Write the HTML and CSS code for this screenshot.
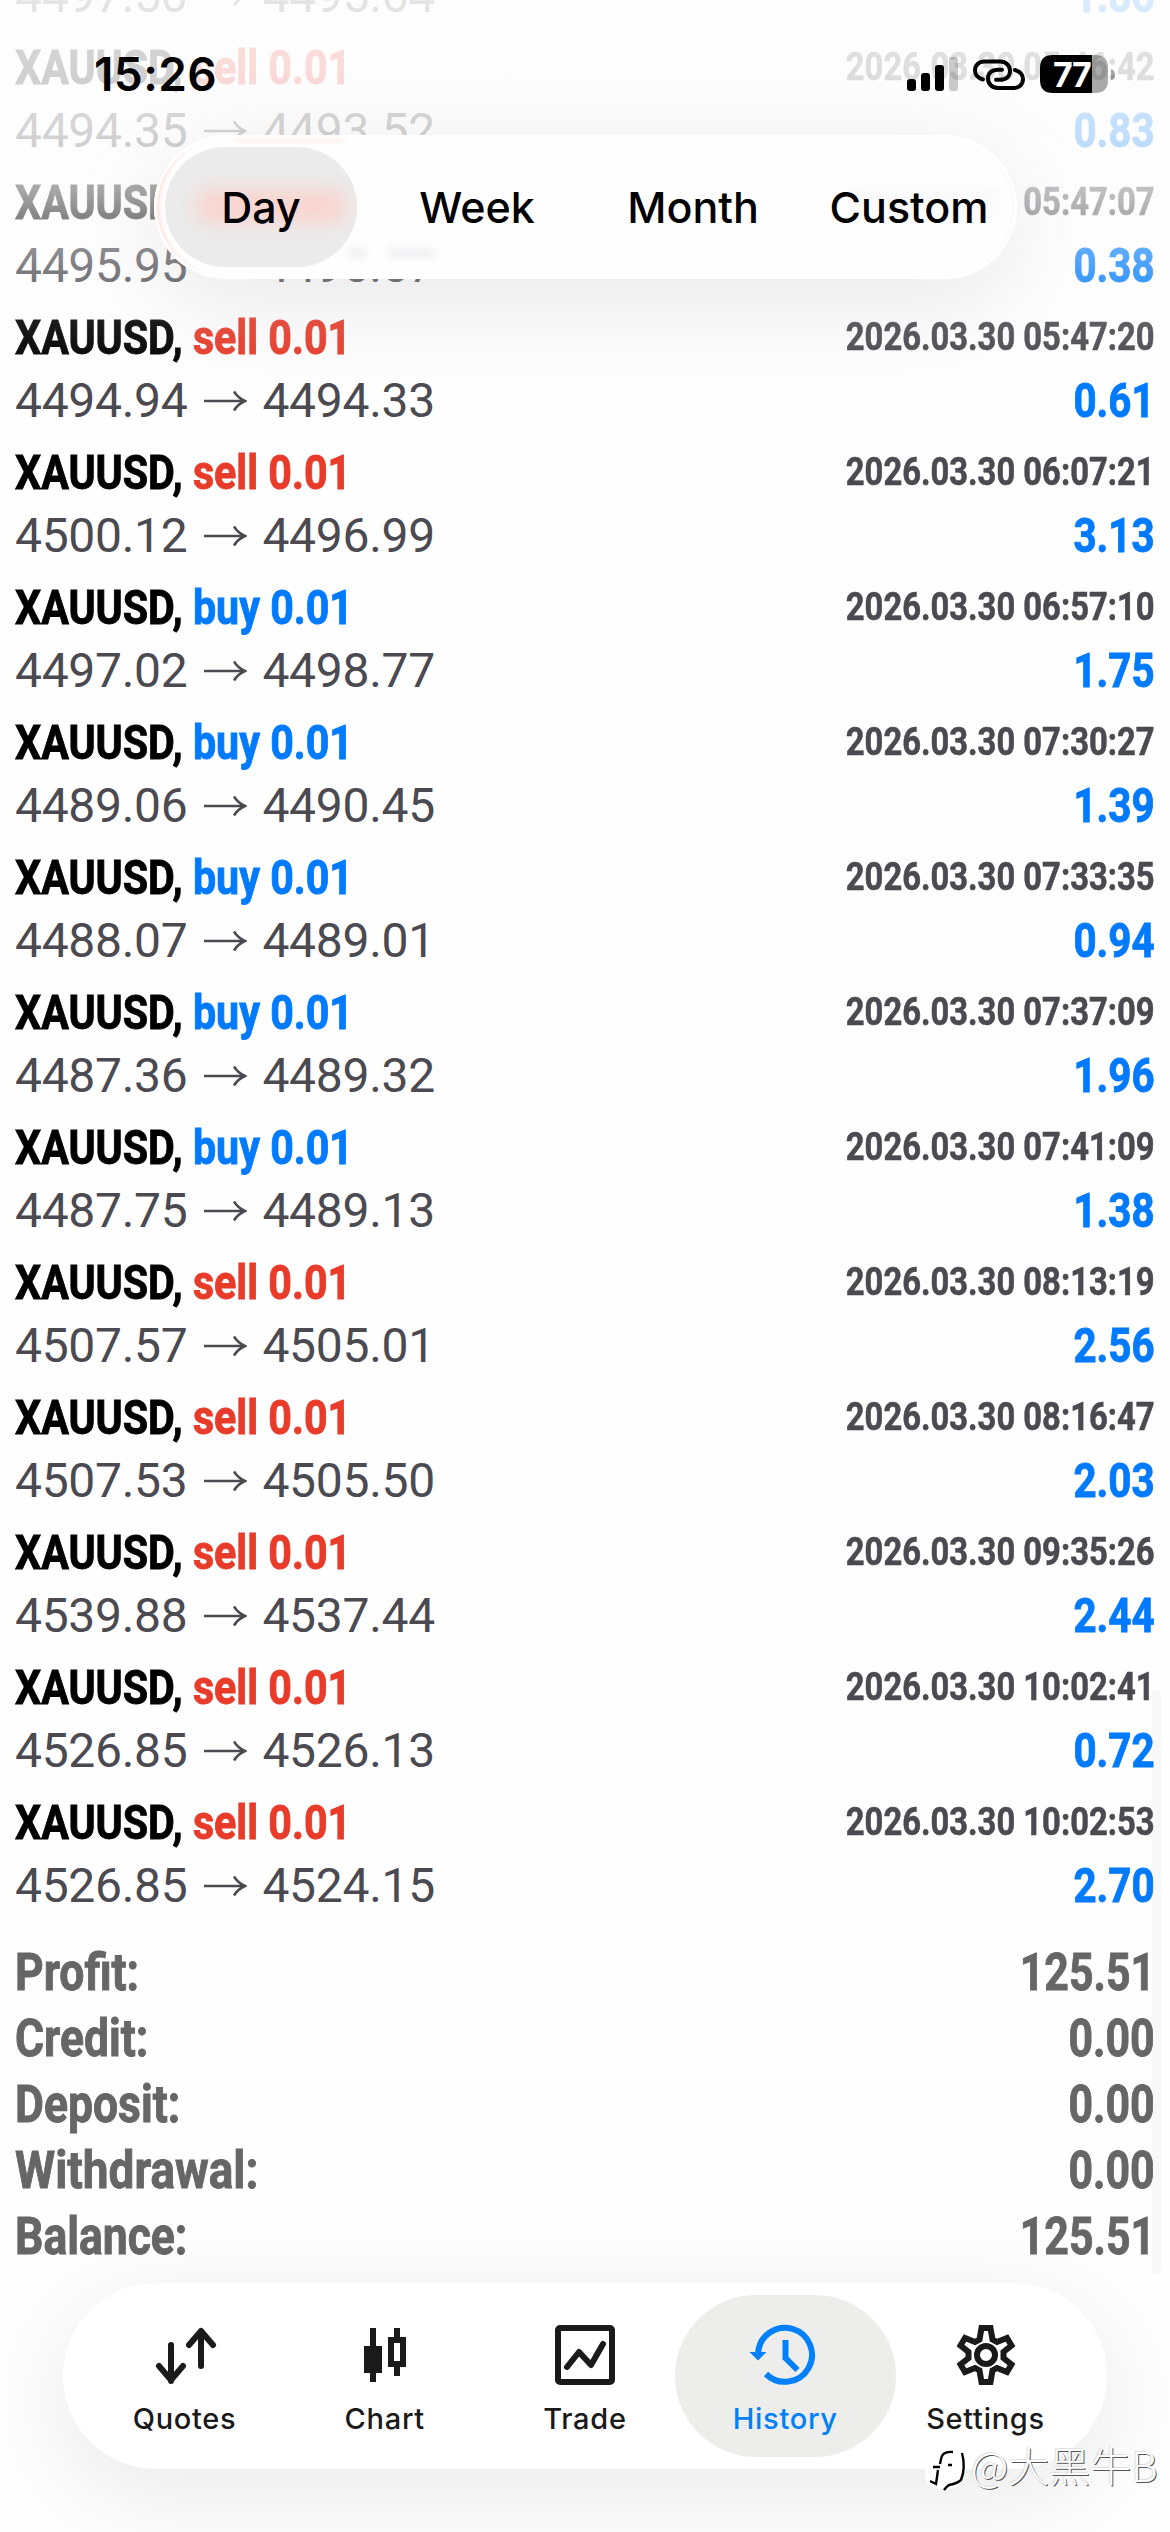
FILE: index.html
```html
<!DOCTYPE html>
<html lang="en">
<head>
<meta charset="utf-8">
<title>History</title>
<link rel="stylesheet" href="styles.css">
</head>
<body>
<main class="screen">
  <section class="deals" id="deals"></section>
  <dl class="totals">
    <div><dt>Profit:</dt><dd>125.51</dd></div>
    <div><dt>Credit:</dt><dd>0.00</dd></div>
    <div><dt>Deposit:</dt><dd>0.00</dd></div>
    <div><dt class="wide">Withdrawal:</dt><dd>0.00</dd></div>
    <div><dt>Balance:</dt><dd>125.51</dd></div>
  </dl>
  <div class="scrollbar"></div>
  <div class="top-fade"></div>

  <header class="overlay-top">
    <div class="status">
      <span class="clock">15:26</span>
      <svg class="status-icons" width="212" height="44" viewBox="904 52 212 44">
        <rect x="907" y="79" width="9" height="12" rx="3"/>
        <rect x="921" y="73" width="9" height="18" rx="3"/>
        <rect x="935" y="65" width="9" height="26" rx="3"/>
        <rect x="949" y="57" width="9" height="34" rx="3" fill="#000" opacity=".2"/>
        <g fill="none" stroke="#000" stroke-width="4" stroke-linecap="round">
          <path d="M983 79.500C978 78 975 75 975 70.500C975 65 979 61.500 984 61.500H1000C1006 61.500 1010 65.500 1010 71C1010 76.500 1006 79.800 1000 79.800H996"/>
          <path d="M1015 70C1020 71.500 1023 74.500 1023 79C1023 84.500 1019 88 1014 88H998C992 88 988 84 988 78.500C988 73 992 69.700 998 69.700H1002"/>
        </g>
        <path d="M1053 55H1092V93H1053Q1040 93 1040 80V68Q1040 55 1053 55Z"/>
        <path d="M1092 55H1095Q1108 55 1108 68V80Q1108 93 1095 93H1092Z" opacity=".33"/>
        <path d="M1111 69Q1115 70 1115 74.500Q1115 79 1111 80Z" opacity=".33"/>
        <text x="1053" y="86.500" class="battery-text">77</text>
      </svg>
    </div>
    <nav class="periods">
      <i class="smudge s1"></i><i class="smudge s2"></i><i class="smudge s3"></i><i class="smudge s4"></i>
      <span class="period active">Day<i class="glow"></i></span>
      <span class="period">Week</span>
      <span class="period">Month</span>
      <span class="period">Custom</span>
    </nav>
  </header>

  <nav class="tabs">
    <div class="tab">
      <svg viewBox="0 0 72 72"><path d="M22 26V62M10 47L22 61L34 47M52 47V12M40 26L52 12L64 26" fill="none" stroke="currentColor" stroke-width="6" stroke-linecap="round" stroke-linejoin="round"/></svg>
      <span>Quotes</span>
    </div>
    <div class="tab">
      <svg viewBox="0 0 72 72"><path d="M21 9H27V27H33V54H27V63H21V54H15V27H21ZM45 9H51V18H57V48H51V57H45V48H39V18H45ZM45 24V42H51V24Z" fill="currentColor" fill-rule="evenodd"/></svg>
      <span>Chart</span>
    </div>
    <div class="tab">
      <svg viewBox="0 0 72 72"><g fill="none" stroke="currentColor" stroke-width="6" stroke-linecap="round" stroke-linejoin="round"><rect x="9" y="9" width="54" height="54" rx="2"/><path d="M18 48L30 33L42 46L54 25"/></g></svg>
      <span>Trade</span>
    </div>
    <div class="tab selected">
      <svg viewBox="0 0 72 72"><path d="M9 35A27 27 0 1 1 17 55M36.500 21V39L48.500 51" fill="none" stroke="currentColor" stroke-width="6"/><path d="M0.500 33H17.500L9 41.500Z" fill="currentColor"/></svg>
      <span>History</span>
    </div>
    <div class="tab">
      <svg viewBox="0 0 72 72"><path d="M31.500 9H40.500L42.500 20.500L47 23L57 19L61.500 26.500L53.500 33V39L61.500 45.500L57 53L47 49L42.500 51.500L40.500 63H31.500L29.500 51.500L25 49L15 53L10.500 45.500L18.500 39V33L10.500 26.500L15 19L25 23L29.500 20.500Z" fill="none" stroke="currentColor" stroke-width="6"/><circle cx="36" cy="36" r="9" fill="none" stroke="currentColor" stroke-width="6"/></svg>
      <span>Settings</span>
    </div>
  </nav>

  <div class="watermark">
    <svg width="46" height="50" viewBox="0 0 46 50"><path d="M20 3Q42 -1 42 18Q43 42 23 44L14 42Q1 38 2 28Q2 6 20 3Z" fill="#fff"/><path d="M30 6Q19 5 18 13L17 18M10 21H17M25 19H29M15 24L13 38L7 35M39 7Q43 22 38 34Q33 38 26 39Q23 41 21 44" fill="none" stroke="#000" stroke-width="2.400"/></svg>
    <span>@大黑牛B</span>
  </div>
</main>
<script src="deals.js"></script>
</body>
</html>
```
FILE: styles.css
```css
body { margin: 0; background: #fff; }
.screen { position: relative; width: 1170px; height: 2532px; overflow: hidden; background: #fefefe; font-family: Roboto, "Liberation Sans", sans-serif; display: flow-root; }

.deals { margin: -99px 15px 0; }
.deal { height: 126px; padding-bottom: 9px; display: grid; grid-template-columns: 1fr auto; grid-template-rows: 63px 63px; line-height: 63px; white-space: pre; }
.title, .profit, .date { font-weight: 700; -webkit-text-stroke: .9px currentColor; }
.title { font-size: 48px; color: #000; justify-self: start; transform: scaleX(.858); transform-origin: left; }
.sell { color: #e83b2a; }
.buy { color: #007aff; }
.date { font-size: 39px; line-height: 62px; color: #4b4a50; -webkit-text-stroke-width: .6px; transform: scaleX(.84); transform-origin: right; }
.prices { font-size: 48px; letter-spacing: -.3px; color: #4b4a50; display: flex; align-items: center; justify-self: start; }
.arrow { width: 44px; height: 22px; margin: 0 15px 0 16px; }
.profit { font-size: 48px; color: #007aff; justify-self: end; transform: scaleX(.84); transform-origin: right; }

.totals { margin: 14px 15px 0; font-size: 51px; font-weight: 700; line-height: 66px; color: #666; -webkit-text-stroke: .9px currentColor; }
.totals div { display: flex; justify-content: space-between; }
.totals dt { transform: scaleX(.872); transform-origin: left; }
.totals .wide { transform: scaleX(.9); }
.totals dd { margin: 0; transform: scaleX(.84); transform-origin: right; }

.scrollbar { position: absolute; left: 1152px; top: 1690px; width: 9px; height: 584px; border-radius: 5px; background: rgba(0,0,0,.022); }
.top-fade { position: absolute; inset: 0 0 auto; height: 400px; background: linear-gradient(rgba(253,253,253,.86) 0, rgba(253,253,253,.82) 80px, rgba(253,253,253,.77) 130px, rgba(253,253,253,.66) 190px, rgba(253,253,253,.52) 218px, rgba(253,253,253,.28) 270px, rgba(253,253,253,.1) 325px, rgba(253,253,253,.04) 360px, rgba(253,253,253,0) 390px); }

.overlay-top { position: absolute; inset: 0 0 auto; font-family: Inter, "Liberation Sans", sans-serif; color: #000; }
.status { height: 135px; display: flex; justify-content: space-between; align-items: flex-start; padding: 52px 54px 0 94px; box-sizing: border-box; }
.clock { font-size: 46px; font-weight: 600; line-height: 45px; letter-spacing: .4px; }
.battery-text { font: 700 34px Inter, sans-serif; fill: #fff; letter-spacing: -1.5px; }
.periods { position: relative; margin-left: 154px; width: 863px; height: 144px; padding: 12px 11px; box-sizing: border-box; display: flex; gap: 24px; border-radius: 72px; background: #fefefe; box-shadow: 0 24px 105px rgba(0,0,0,.085), inset 0 0 0 3px #fff, inset 7px 0 4px -2px #fddcd6, inset -5px 0 4px -2px #f3f3f3; }
.period { position: relative; width: 192px; height: 120px; display: flex; align-items: center; justify-content: center; font-size: 43px; font-weight: 500; line-height: 120px; border-radius: 60px; z-index: 1; }
.active { background: #ebebeb; }
.glow { position: absolute; z-index: -1; left: 32px; top: 42px; width: 148px; height: 34px; border-radius: 12px; background: #f9d5cf; filter: blur(9px); }
.smudge { position: absolute; filter: blur(4px); }
.s1 { left: 82px; top: 4px; width: 108px; height: 3px; background: #fdebe8; filter: blur(2px); }
.s2 { left: 194px; top: 114px; width: 18px; height: 9px; background: #eeeef0; }
.s3 { left: 234px; top: 114px; width: 46px; height: 9px; background: #eeeef0; }
.s4 { left: 695px; top: 54px; width: 150px; height: 28px; background: #fafafa; }

.tabs { position: absolute; left: 63px; top: 2283px; width: 1044px; height: 186px; padding: 12px 11px; box-sizing: border-box; display: flex; justify-content: space-between; border-radius: 93px; background: #fff; box-shadow: 0 24px 105px rgba(0,0,0,.085); font-family: Inter, "Liberation Sans", sans-serif; color: #1a1a1a; }
.tab { width: 221px; margin-right: -21px; height: 162px; border-radius: 81px; display: flex; flex-direction: column; align-items: center; }
.tab:last-child { margin-right: 0; }
.tab svg { width: 72px; height: 72px; margin-top: 24px; }
.tab span { font-size: 29px; font-weight: 500; letter-spacing: .7px; line-height: 36px; margin-top: 10px; }
.selected { background: #ededeb; color: #0080fa; }

.watermark { position: absolute; left: 923px; top: 2446px; display: flex; align-items: flex-start; gap: 2px; font: 300 41px/37px "Noto Sans CJK SC", sans-serif; color: #fff; }
.watermark span { text-shadow: 1px 1px 0 #555, -1px -1px 1px #ddd; white-space: nowrap; }
```
FILE: deals.js
```js
const deals = [
  ["sell", "2026.03.30 05:46:20", "4497.50", "4495.64", "1.86"],
  ["sell", "2026.03.30 05:46:42", "4494.35", "4493.52", "0.83"],
  ["sell", "2026.03.30 05:47:07", "4495.95", "4495.57", "0.38"],
  ["sell", "2026.03.30 05:47:20", "4494.94", "4494.33", "0.61"],
  ["sell", "2026.03.30 06:07:21", "4500.12", "4496.99", "3.13"],
  ["buy", "2026.03.30 06:57:10", "4497.02", "4498.77", "1.75"],
  ["buy", "2026.03.30 07:30:27", "4489.06", "4490.45", "1.39"],
  ["buy", "2026.03.30 07:33:35", "4488.07", "4489.01", "0.94"],
  ["buy", "2026.03.30 07:37:09", "4487.36", "4489.32", "1.96"],
  ["buy", "2026.03.30 07:41:09", "4487.75", "4489.13", "1.38"],
  ["sell", "2026.03.30 08:13:19", "4507.57", "4505.01", "2.56"],
  ["sell", "2026.03.30 08:16:47", "4507.53", "4505.50", "2.03"],
  ["sell", "2026.03.30 09:35:26", "4539.88", "4537.44", "2.44"],
  ["sell", "2026.03.30 10:02:41", "4526.85", "4526.13", "0.72"],
  ["sell", "2026.03.30 10:02:53", "4526.85", "4524.15", "2.70"]
];

const arrow = '<svg class="arrow" viewBox="0 0 44 22"><path d="M1 11H42M31 1.500Q35 8 42 11Q35 14 31 20.500" fill="none" stroke="currentColor" stroke-width="2.500"/></svg>';

document.getElementById("deals").innerHTML = deals.map(([side, date, open, close, profit]) => `
  <article class="deal"><span class="title">XAUUSD, <span class="${side}">${side} 0.01</span></span><span class="date">${date}</span><span class="prices">${open}${arrow}${close}</span><span class="profit">${profit}</span></article>`.trim()).join("");
```
